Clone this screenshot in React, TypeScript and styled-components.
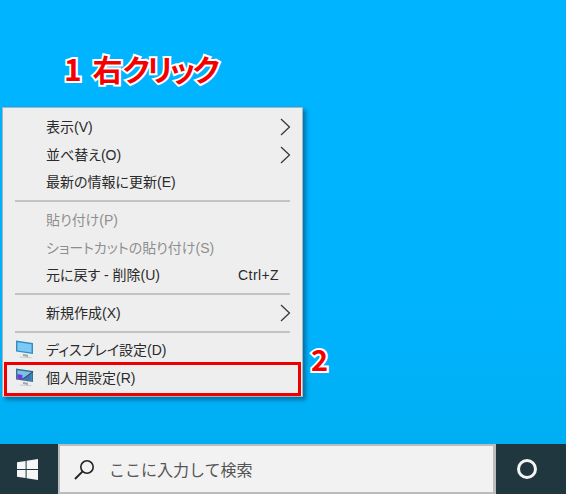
import React from 'react'
import styled, { createGlobalStyle } from 'styled-components'

const GlobalStyle = createGlobalStyle`
  html, body { margin: 0; padding: 0; }
  body {
    width: 566px;
    height: 494px;
    overflow: hidden;
    font-family: "Liberation Sans", "Noto Sans CJK JP", sans-serif;
    font-feature-settings: "palt";
  }
`

const Screen = styled.div`
  width: 566px;
  height: 494px;
  display: flex;
  flex-direction: column;
`

const Desktop = styled.main`
  position: relative;
  flex: 1;
  padding: 107px 0 0 2px;
  background: linear-gradient(180deg, #00b4ff 0%, #00b3fd 70%, #00aff3 100%);
`

const Callout = styled.span<{ $left: number; $top: number; $size: number }>`
  position: absolute;
  left: ${p => p.$left}px;
  top: ${p => p.$top}px;
  font-family: "Noto Sans CJK JP", sans-serif;
  font-size: ${p => p.$size}px;
  line-height: 1;
  font-weight: 700;
  word-spacing: 4px;
  color: #f40000;
  white-space: pre;
  -webkit-text-stroke: 4px #fff;
  paint-order: stroke fill;
`

const Tight = styled.span`
  letter-spacing: -2.6px;
`

const Menu = styled.ul`
  list-style: none;
  box-sizing: border-box;
  width: 301px;
  height: 290px;
  margin: 0;
  padding: 5px 1px 0;
  background: #eeeeee;
  border: 1px solid #a9b4b9;
  box-shadow: 3px 3px 4px rgba(0, 40, 70, 0.45);
  font-size: 14px;
  color: #2a2a2a;
`

const Row = styled.li<{ $disabled?: boolean; $marked?: boolean }>`
  position: relative;
  display: flex;
  align-items: center;
  height: 27.8px;
  padding: 0 10px 0 42px;
  color: ${p => (p.$disabled ? '#8e8e8e' : 'inherit')};
  &::after {
    content: ${p => (p.$marked ? '""' : 'none')};
    position: absolute;
    left: 0;
    right: 0;
    top: -2px;
    bottom: -4px;
    border: 3px solid #ee0000;
  }
`

const Label = styled.span`
  flex: 1;
  line-height: 1;
`

const Shortcut = styled.span`
  margin-right: 12px;
  line-height: 1;
  letter-spacing: 0.4px;
`

const IconSlot = styled.span`
  position: absolute;
  left: 12px;
  top: 3px;
  width: 18px;
  height: 20px;
`

const Separator = styled.li`
  height: 2px;
  margin: 4px 11px 3.5px;
  background: #c3c3c3;
`

const Taskbar = styled.footer`
  flex: none;
  height: 50px;
  display: flex;
  background: #21373f;
`

const StartButton = styled.div`
  box-sizing: border-box;
  width: 58px;
  padding-right: 3px;
  display: flex;
  align-items: center;
  justify-content: center;
`

const SearchBox = styled.div`
  box-sizing: border-box;
  width: 438px;
  display: flex;
  align-items: center;
  gap: 14px;
  padding-left: 14px;
  background: #f2f2f2;
  border: 2px solid #bcbcbc;
  border-right-width: 3px;
  font-size: 16px;
  font-feature-settings: normal;
  color: #555;
`

const CortanaButton = styled.div`
  flex: 1;
  padding-right: 9px;
  display: flex;
  align-items: center;
  justify-content: center;
`

const CortanaRing = styled.span`
  box-sizing: border-box;
  width: 20px;
  height: 20px;
  border: 3px solid #f4f4f4;
  border-radius: 50%;
`

const Chevron = () => (
  <svg width="11" height="18" viewBox="0 0 11 18" fill="none" stroke="#333" strokeWidth="1.2">
    <path d="M1 1l8.5 8L1 17" />
  </svg>
)

const DisplayIcon = () => (
  <svg width="18" height="20" viewBox="0 0 18 20">
    <path d="M0 1.5l17 2.5v11L0 12.5z" fill="#2f8fc4" />
    <path d="M1.4 3.2l14.2 2.1v8.3L1.4 11.5z" fill="#7cc9f6" />
    <path d="M7 15l5 .8v2.2L7 17z" fill="#9aa7ae" />
    <path d="M3.5 17.5l12 .8v1l-12-.7z" fill="#c4ccd1" />
  </svg>
)

const PersonalizeIcon = () => (
  <svg width="18" height="20" viewBox="0 0 18 20">
    <path d="M0 1.5l17 2.5v11L0 12.5z" fill="#3a6f93" />
    <path d="M1.4 3.2l14.2 2.1v8.3L1.4 11.5z" fill="#76c4e6" />
    <path d="M6.4 12.4l9.2-6.4v7.6z" fill="#3f74b8" />
    <path d="M1.4 7l5 1v4.4l-5-.9z" fill="#7a35d8" />
    <path d="M6.4 12.4L17 4.6" stroke="#2b4560" strokeWidth="1.1" fill="none" />
    <path d="M7 15l5 .8v2.2L7 17z" fill="#9aa7ae" />
    <path d="M3.5 17.5l12 .8v1l-12-.7z" fill="#c4ccd1" />
  </svg>
)

const WindowsLogo = () => (
  <svg width="21" height="21" viewBox="0 0 21 21" fill="#f4f6f7">
    <path d="M0 3.2l8.6-1.2v8H0zM9.6 1.8L21 0v10H9.6zM0 11h8.6v8L0 17.8zM9.6 11H21v10L9.6 19.2z" />
  </svg>
)

const SearchIcon = () => (
  <svg width="21" height="21" viewBox="0 0 21 21" fill="none" stroke="#222" strokeWidth="1.6">
    <circle cx="13" cy="8" r="6.2" />
    <path d="M8.6 12.4L1 20" strokeWidth="1.9" />
  </svg>
)

export default function App() {
  return (
    <Screen>
      <GlobalStyle />
      <Desktop>
        <Menu>
          <Row><Label>表示(V)</Label><Chevron /></Row>
          <Row><Label>並べ替え(O)</Label><Chevron /></Row>
          <Row><Label>最新の情報に更新(E)</Label></Row>
          <Separator />
          <Row $disabled><Label>貼り付け(P)</Label></Row>
          <Row $disabled><Label>ショートカットの貼り付け(S)</Label></Row>
          <Row><Label>元に戻す - 削除(U)</Label><Shortcut>Ctrl+Z</Shortcut></Row>
          <Separator />
          <Row><Label>新規作成(X)</Label><Chevron /></Row>
          <Separator />
          <Row><IconSlot><DisplayIcon /></IconSlot><Label>ディスプレイ設定(D)</Label></Row>
          <Row $marked><IconSlot><PersonalizeIcon /></IconSlot><Label>個人用設定(R)</Label></Row>
        </Menu>
        <Callout $left={64} $top={53} $size={30}>1 右<Tight>クリック</Tight></Callout>
        <Callout $left={311} $top={344} $size={29}>2</Callout>
      </Desktop>
      <Taskbar>
        <StartButton><WindowsLogo /></StartButton>
        <SearchBox>
          <SearchIcon />
          <span>ここに入力して検索</span>
        </SearchBox>
        <CortanaButton><CortanaRing /></CortanaButton>
      </Taskbar>
    </Screen>
  )
}
